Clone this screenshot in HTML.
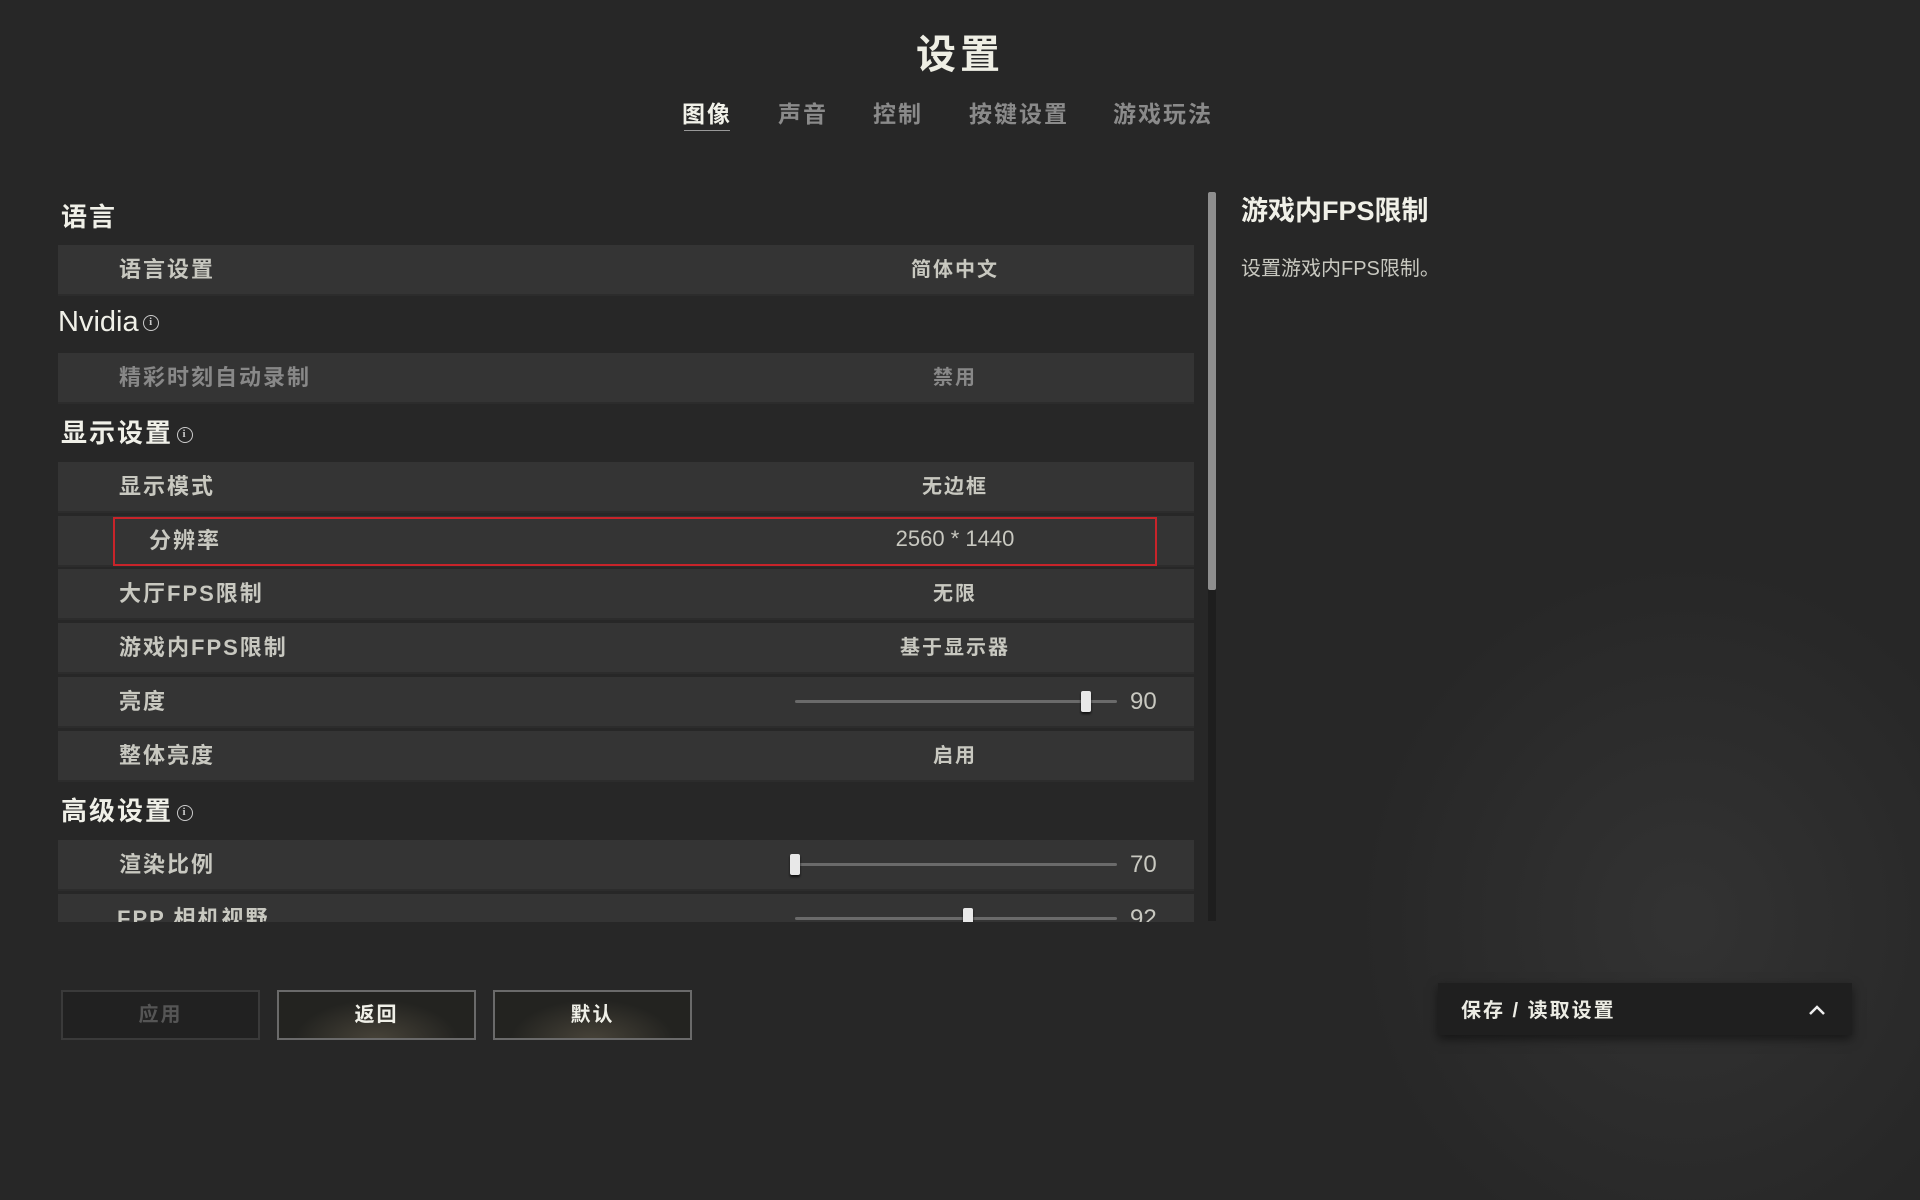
<!DOCTYPE html>
<html style="background:#272727"><head><meta charset="utf-8">
<style>
*{margin:0;padding:0;box-sizing:border-box}
body{width:1920px;height:1080px;overflow:hidden;background:#272727;font-family:"Liberation Sans","Noto Sans CJK SC",sans-serif;color:#d8d8d0;position:relative}
.smoke{position:absolute;left:1300px;top:500px;width:700px;height:700px;background:radial-gradient(ellipse at 55% 60%,rgba(60,60,60,0.55),rgba(39,39,39,0) 60%)}
.title{position:absolute;top:22px;left:0;width:1920px;text-align:center;font-size:40px;font-weight:bold;color:#eeeee4;letter-spacing:4px}
.tab{position:absolute;top:95px;font-size:23px;color:#8a8a8a;letter-spacing:2px;font-weight:bold}
.tab.on{color:#f2f2ea}
.ul{position:absolute;left:684px;top:130px;width:46px;height:1px;background:#999}
.h{position:absolute;left:61px;font-size:26px;font-weight:bold;color:#f0f0e8;letter-spacing:2px}
.info{display:inline-block;width:16px;height:16px;border:1.5px solid #ccc;border-radius:50%;font-size:11px;line-height:13px;text-align:center;vertical-align:middle;margin-left:4px;font-family:"Liberation Serif",serif;font-weight:bold;color:#ccc}
.row{position:absolute;left:58px;width:1136px;height:49px;background:#343434;box-shadow:0 2px 0 #2c2c2c}
.row .l{position:absolute;left:61px;top:7px;font-size:22px;color:#c8c8c0;font-weight:bold;letter-spacing:2px}
.row .v{position:absolute;left:897px;width:240px;margin-left:-120px;text-align:center;top:8px;font-size:20px;color:#c8c8c0;font-weight:bold;letter-spacing:2px}
.dim .l,.dim .v{color:#888}
.track{position:absolute;left:737px;top:23px;width:322px;height:3px;background:#6a6a6a;border-radius:2px}
.thumb{position:absolute;top:14px;width:10px;height:21px;background:#e8e8e8;border-radius:2px;box-shadow:0 2px 2px #111}
.num{position:absolute;left:1072px;top:11px;font-size:24px;color:#c8c8c0}
.red{position:absolute;left:113px;top:517px;width:1044px;height:49px;border:2px solid #c8242a}
.scroll{position:absolute;left:1208px;top:192px;width:8px;height:729px;background:#1e1e1e}
.scroll div{width:8px;height:398px;background:#8e8e8e;border-radius:2px}
.clip{position:absolute;left:0;top:0;width:1200px;height:922px;overflow:hidden}
.rt{position:absolute;left:1241px;top:189px;font-size:27px;font-weight:bold;color:#f0f0e8;letter-spacing:0}
.rd{position:absolute;left:1241px;top:252px;font-size:20px;color:#c8c8c0;letter-spacing:0}
.btn{position:absolute;top:990px;width:199px;height:50px;border:2px solid #6a6a6a;text-align:center;line-height:46px;font-size:20px;font-weight:bold;color:#f0f0e8;background:radial-gradient(ellipse at 50% 110%,rgba(120,110,90,0.45),rgba(30,30,28,0) 60%),#232320;letter-spacing:2px}
.btn.off{color:#555;border-color:#3a3a3a;background:#212121}
.save{position:absolute;left:1438px;top:983px;width:414px;height:52px;background:#1f1f1f;box-shadow:0 4px 10px rgba(0,0,0,.5)}
.save span{position:absolute;left:23px;top:11px;font-size:20px;font-weight:bold;color:#ecece4;letter-spacing:2px}
</style></head><body>
<div class="smoke"></div>
<div class="title">设置</div>
<div class="tab on" style="left:682px">图像</div>
<div class="tab" style="left:778px">声音</div>
<div class="tab" style="left:873px">控制</div>
<div class="tab" style="left:969px">按键设置</div>
<div class="tab" style="left:1113px">游戏玩法</div>
<div class="ul"></div>

<div class="clip">
<div class="h" style="top:197px">语言</div>
<div class="row" style="top:245px"><div class="l">语言设置</div><div class="v">简体中文</div></div>
<div class="h" style="top:306px;font-weight:normal;font-size:29px;left:58px;letter-spacing:0">Nvidia<span class="info">i</span></div>
<div class="row dim" style="top:353px"><div class="l">精彩时刻自动录制</div><div class="v">禁用</div></div>
<div class="h" style="top:413px">显示设置<span class="info">i</span></div>
<div class="row" style="top:462px"><div class="l">显示模式</div><div class="v">无边框</div></div>
<div class="row" style="top:516px"><div class="l" style="left:91px">分辨率</div><div class="v" style="font-weight:normal;font-size:22px;letter-spacing:0;top:10px">2560 * 1440</div></div>
<div class="red"></div>
<div class="row" style="top:569px"><div class="l">大厅FPS限制</div><div class="v">无限</div></div>
<div class="row" style="top:623px"><div class="l">游戏内FPS限制</div><div class="v">基于显示器</div></div>
<div class="row" style="top:677px"><div class="l">亮度</div><div class="track"></div><div class="thumb" style="left:1023px"></div><div class="num">90</div></div>
<div class="row" style="top:731px"><div class="l">整体亮度</div><div class="v">启用</div></div>
<div class="h" style="top:791px">高级设置<span class="info">i</span></div>
<div class="row" style="top:840px"><div class="l">渲染比例</div><div class="track"></div><div class="thumb" style="left:732px"></div><div class="num">70</div></div>
<div class="row" style="top:894px"><div class="l" style="left:59px">FPP 相机视野</div><div class="track"></div><div class="thumb" style="left:905px"></div><div class="num">92</div></div>
</div>
<div class="scroll"><div></div></div>

<div class="rt">游戏内FPS限制</div>
<div class="rd">设置游戏内FPS限制。</div>

<div class="btn off" style="left:61px">应用</div>
<div class="btn" style="left:277px">返回</div>
<div class="btn" style="left:493px">默认</div>

<div class="save"><span>保存 / 读取设置</span>
<svg style="position:absolute;left:370px;top:20px" width="18" height="14" viewBox="0 0 18 14"><path d="M2 11 L9 4 L16 11" fill="none" stroke="#eee" stroke-width="2.5"/></svg></div>
</body></html>
